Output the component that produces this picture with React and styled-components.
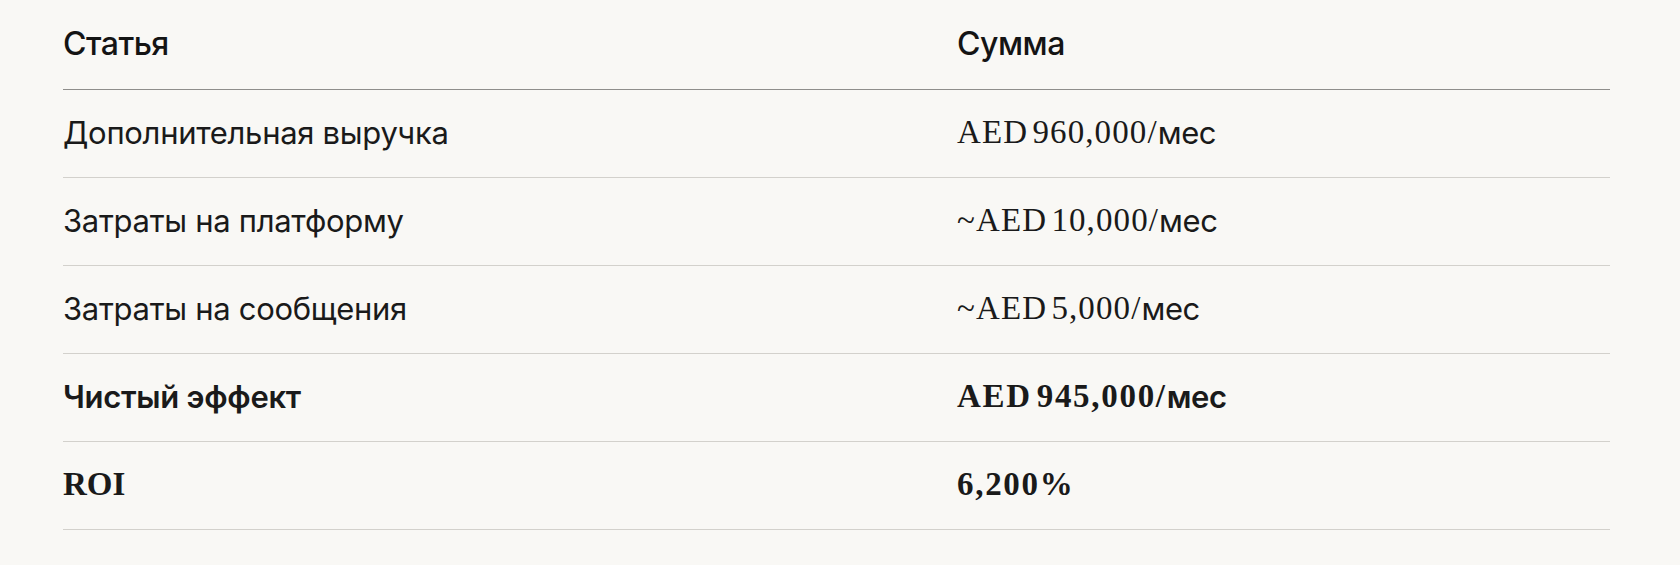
import React from "react";
import styled, { createGlobalStyle } from "styled-components";

const Global = createGlobalStyle`
  html, body { margin: 0; padding: 0; background: #f9f8f5; }
  body { font-family: Inter, "Liberation Sans", Arial, sans-serif; color: #171717; }
`;

const Page = styled.div`
  padding: 0 70px 0 63px;
  background: #f9f8f5;
  min-height: 565px;
  box-sizing: border-box;
`;

const Table = styled.div`
  width: 1547px;
  display: grid;
  grid-template-columns: 894px 1fr;
`;

const HeadCell = styled.div`
  height: 90px;
  border-bottom: 1px solid #8f8e8b;
  display: flex;
  align-items: center;
  box-sizing: border-box;
  padding-bottom: 2px;
  font-family: Inter, "Liberation Sans", Arial, sans-serif;
  font-weight: 500;
  font-size: 32px;
  letter-spacing: -0.5px;
  color: #141414;
`;

const Cell = styled.div`
  height: 88px;
  border-bottom: 1px solid #d3d1cc;
  display: flex;
  align-items: center;
  box-sizing: border-box;
  padding-bottom: 3px;
  color: #1a1a1a;
  font-size: 31px;
  font-weight: ${(p) => (p.$strong ? 600 : 400)};
`;

const Label = styled.span`
  font-family: Inter, "Liberation Sans", Arial, sans-serif;
  letter-spacing: -0.3px;
`;

const Num = styled.span`
  font-family: "Liberation Serif", "Times New Roman", serif;
  font-size: 33px;
  font-weight: ${(p) => (p.$strong ? 700 : 400)};
  letter-spacing: ${(p) => (p.$value ? (p.$strong ? "1.7px" : "1.1px") : "0px")};
  word-spacing: ${(p) => (p.$value ? "-5px" : "0px")};
`;

const Unit = styled.span`
  font-family: Inter, "Liberation Sans", Arial, sans-serif;
  font-size: 31px;
  letter-spacing: -0.4px;
`;

const rows = [
  { label: "Дополнительная выручка", num: "AED 960,000/", unit: "мес" },
  { label: "Затраты на платформу", num: "~AED 10,000/", unit: "мес" },
  { label: "Затраты на сообщения", num: "~AED 5,000/", unit: "мес" },
  { label: "Чистый эффект", num: "AED 945,000/", unit: "мес", strong: true },
  { label: "ROI", num: "6,200%", serifLabel: true, strong: true },
];

export default function App() {
  return (
    <>
      <Global />
      <Page>
        <Table>
          <HeadCell>Статья</HeadCell>
          <HeadCell>Сумма</HeadCell>
          {rows.map((r) => (
            <React.Fragment key={r.label}>
              <Cell $strong={r.strong}>
                {r.serifLabel ? (
                  <Num $strong={r.strong}>{r.label}</Num>
                ) : (
                  <Label>{r.label}</Label>
                )}
              </Cell>
              <Cell $strong={r.strong}>
                <Num $strong={r.strong} $value>
                  {r.num}
                </Num>
                {r.unit && <Unit>{r.unit}</Unit>}
              </Cell>
            </React.Fragment>
          ))}
        </Table>
      </Page>
    </>
  );
}
